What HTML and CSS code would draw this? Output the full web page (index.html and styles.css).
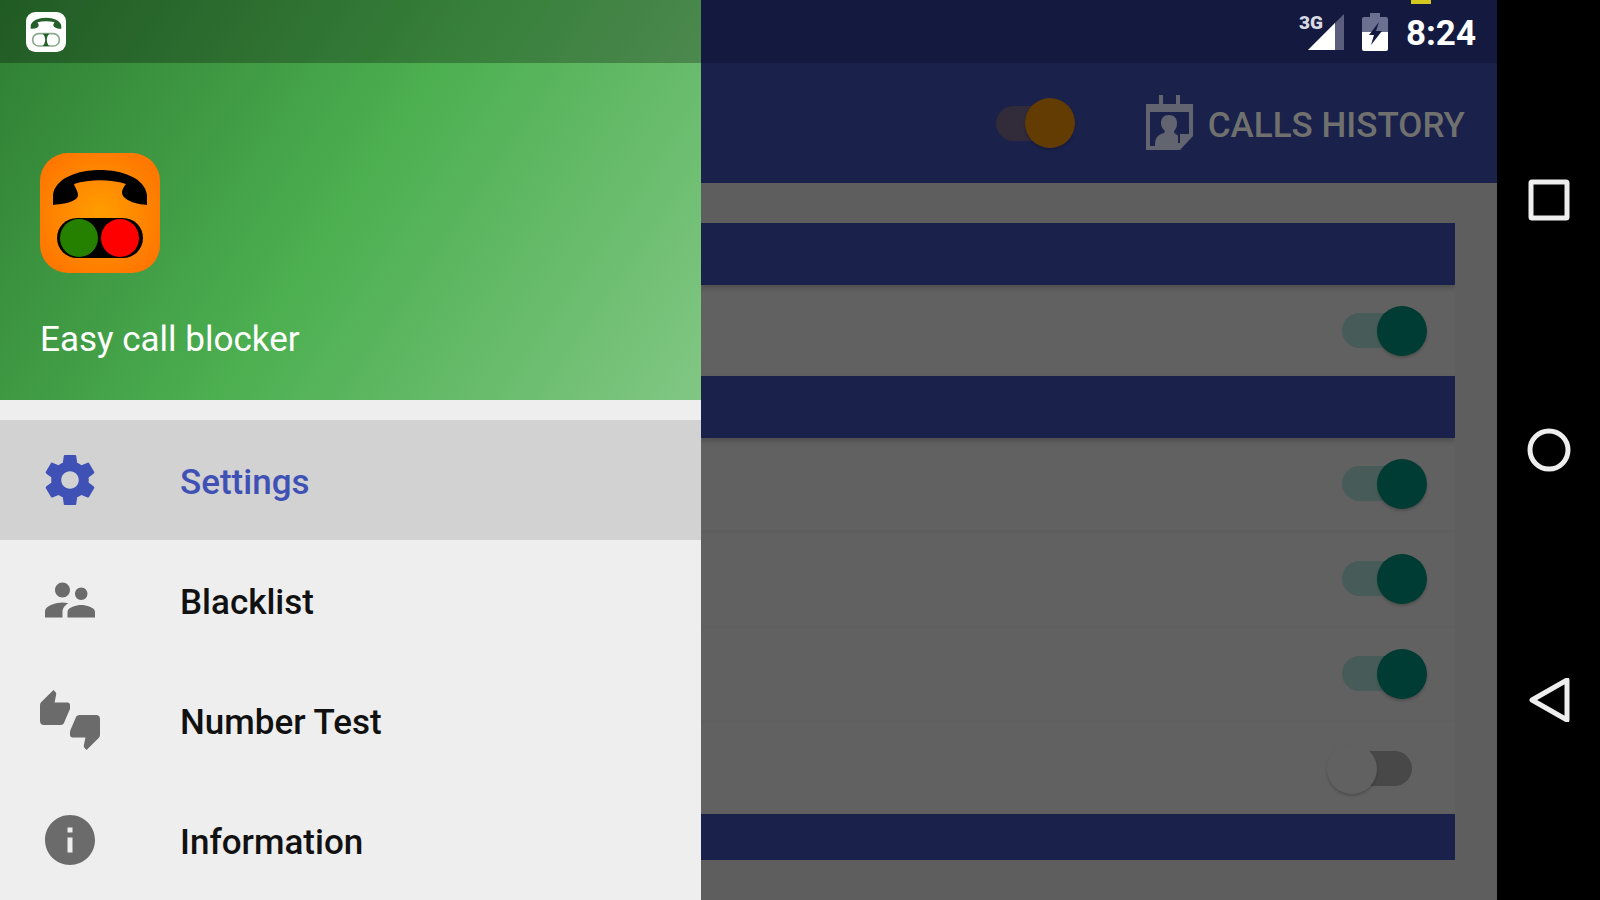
FILE: index.html
```
<!DOCTYPE html>
<html lang="en">
<head>
    <meta charset="UTF-8">
    <meta name="viewport" content="width=device-width, initial-scale=1.0">
    <title>Easy call blocker</title>
    <link rel="stylesheet" href="styles.css">
</head>
<body>
    <aside class="drawer">
        <header class="drawer-header">
            <div class="drawer-status">
                <svg class="notification" viewBox="0 0 120 120" aria-hidden="true">
                    <rect width="120" height="120" rx="28" fill="#fff"/>
                    <path fill="#23602a" d="M14 50V42C16 25 38 17 60 17S104 25 106 42V50C98 50 90 49 84 44C80 40 82 36 86 31C70 27 50 27 34 31C38 36 40 41 36 45C30 50 22 50 14 50z"/>
                    <rect x="20" y="65" width="80" height="37" rx="18" fill="none" stroke="#8aaa8d" stroke-width="5"/>
                    <path fill="#23602a" d="M50 65H70C60 74 60 92 70 102H50C60 92 60 74 50 65z"/>
                </svg>
            </div>
            <div class="account">
                <svg class="app-icon" viewBox="0 0 120 120" aria-hidden="true">
                    <defs>
                        <radialGradient id="orange" cx="50%" cy="50%" r="60%">
                            <stop offset="0" stop-color="#ff9d00"/>
                            <stop offset="1" stop-color="#ff7600"/>
                        </radialGradient>
                    </defs>
                    <rect width="120" height="120" rx="28" fill="url(#orange)"/>
                    <path d="M13 52V42C15 25 38 17 60 17S105 25 107 42V52C99 51 91 50 85 45C80 41 82 36 86 31C70 26 50 26 34 31C35 35 41 42 36 46C31 50 21 51 13 52z"/>
                    <rect x="17" y="65" width="86" height="40" rx="20"/>
                    <circle cx="39" cy="85" r="19" fill="#268000"/>
                    <circle cx="80" cy="85" r="19" fill="#f00"/>
                </svg>
                <span class="label">Easy call blocker</span>
            </div>
        </header>
        <nav class="menu">
            <a class="menu-item active" href="#settings">
                <svg viewBox="0 0 24 24" aria-hidden="true"><path d="M19.43 12.98c.04-.32.07-.64.07-.98s-.03-.66-.07-.98l2.11-1.65c.19-.15.24-.42.12-.64l-2-3.46c-.12-.22-.39-.3-.61-.22l-2.49 1c-.52-.4-1.08-.73-1.69-.98l-.38-2.65C14.46 2.18 14.25 2 14 2h-4c-.25 0-.46.18-.49.42l-.38 2.65c-.61.25-1.17.59-1.69.98l-2.49-1c-.23-.09-.49 0-.61.22l-2 3.46c-.13.22-.07.49.12.64l2.11 1.65c-.04.32-.07.65-.07.98s.03.66.07.98l-2.11 1.65c-.19.15-.24.42-.12.64l2 3.46c.12.22.39.3.61.22l2.49-1c.52.4 1.08.73 1.69.98l.38 2.65c.03.24.24.42.49.42h4c.25 0 .46-.18.49-.42l.38-2.65c.61-.25 1.17-.59 1.69-.98l2.49 1c.23.09.49 0 .61-.22l2-3.46c.12-.22.07-.49-.12-.64l-2.11-1.65zM12 15.5c-1.93 0-3.5-1.57-3.5-3.5s1.57-3.5 3.5-3.5 3.5 1.57 3.5 3.5-1.57 3.5-3.5 3.5z"/></svg>
                <span class="label">Settings</span>
            </a>
            <a class="menu-item" href="#blacklist">
                <svg viewBox="0 0 24 24" aria-hidden="true"><path d="M16.5 12c1.38 0 2.49-1.12 2.49-2.5S17.88 7 16.5 7C15.12 7 14 8.12 14 9.5s1.12 2.5 2.5 2.5zM9 11c1.66 0 2.99-1.34 2.99-3S10.66 5 9 5C7.34 5 6 6.34 6 8s1.34 3 3 3zm7.5 3c-1.83 0-5.5.92-5.5 2.75V19h11v-2.25c0-1.83-3.67-2.75-5.5-2.75zM9 13c-2.33 0-7 1.17-7 3.5V19h7v-2.25c0-.85.33-2.34 2.37-3.47C10.5 13.1 9.66 13 9 13z"/></svg>
                <span class="label">Blacklist</span>
            </a>
            <a class="menu-item" href="#test">
                <svg viewBox="0 0 24 24" aria-hidden="true"><path d="M12 6c0-.55-.45-1-1-1H5.82l.66-3.18.02-.23c0-.31-.13-.59-.33-.8L5.38 0 .44 4.94C.17 5.21 0 5.59 0 6v6.5c0 .83.67 1.5 1.5 1.5h6.75c.62 0 1.15-.38 1.38-.91l2.26-5.29c.07-.17.11-.36.11-.55V6zm10.5 4h-6.75c-.62 0-1.15.38-1.38.91l-2.26 5.29c-.07.17-.11.36-.11.55V18c0 .55.45 1 1 1h5.18l-.66 3.18-.02.24c0 .31.13.59.33.8l.79.78 4.94-4.94c.27-.27.44-.65.44-1.06v-6.5c0-.83-.67-1.5-1.5-1.5z"/></svg>
                <span class="label">Number Test</span>
            </a>
            <a class="menu-item" href="#information">
                <svg viewBox="0 0 24 24" aria-hidden="true"><path d="M12 2C6.48 2 2 6.48 2 12s4.48 10 10 10 10-4.48 10-10S17.52 2 12 2zm1 15h-2v-6h2v6zm0-8h-2V7h2v2z"/></svg>
                <span class="label">Information</span>
            </a>
        </nav>
    </aside>

    <main class="app">
        <div class="status-bar">
            <span class="marker"></span>
            <div class="signal">
                <svg viewBox="0 0 36 36" aria-hidden="true">
                    <path fill="#5b5f7d" d="M36 0V36H0z"/>
                    <path fill="#fff" d="M27 9V36H0z"/>
                </svg>
                <span class="network">3G</span>
            </div>
            <svg class="battery" viewBox="0 0 26 38" aria-hidden="true">
                <path fill="#6c7090" d="M8 0h10v4h6q2 0 2 2v13H0V6q0-2 2-2h6z"/>
                <path fill="#fff" d="M0 19h26v17q0 2-2 2H2q-2 0-2-2z"/>
                <path fill="#141a3f" d="M17 9L7 22h5l-3 10 11-14h-6z"/>
            </svg>
            <span class="label time">8:24</span>
        </div>

        <div class="toolbar">
            <input class="switch orange" type="checkbox" aria-label="Call blocking" checked>
            <button class="history" type="button">
                <svg viewBox="0 0 48 56" aria-hidden="true">
                    <path fill="#62646f" d="M14 0h4v9h13V0h4v9h13v32L35 55H1V9h13zM5 17v34h28l1-12h10V17z" fill-rule="evenodd"/>
                    <path fill="#62646f" d="M24 20c5 0 8 3 8 8 0 4-1 6-3 8 0 4 5 3 5 7v8H10c0-8 2-11 9-13 1-1 1-2 0-3-2-2-3-4-3-7 0-5 3-8 8-8z"/>
                    <path stroke="#1a214b" stroke-width="2" fill="none" d="M34 39v9"/>
                </svg>
                <span class="label">CALLS HISTORY</span>
            </button>
        </div>

        <div class="content">
            <div class="cards">
                <section>
                    <div class="card-title"></div>
                    <div class="rows">
                        <div class="row"><input class="switch" type="checkbox" aria-label="Option 1" checked></div>
                    </div>
                </section>
                <section>
                    <div class="card-title"></div>
                    <div class="rows">
                        <div class="row"><input class="switch" type="checkbox" aria-label="Option 2" checked></div>
                        <div class="row"><input class="switch" type="checkbox" aria-label="Option 3" checked></div>
                        <div class="row"><input class="switch" type="checkbox" aria-label="Option 4" checked></div>
                        <div class="row"><input class="switch" type="checkbox" aria-label="Option 5"></div>
                    </div>
                </section>
                <section>
                    <div class="card-title"></div>
                </section>
            </div>
        </div>
    </main>

    <div class="system-nav">
        <button type="button" aria-label="Recent apps">
            <svg viewBox="0 0 44 44"><rect x="4" y="4" width="36" height="36" rx="1"/></svg>
        </button>
        <button type="button" aria-label="Home">
            <svg viewBox="0 0 44 44"><circle cx="22" cy="22" r="19"/></svg>
        </button>
        <button type="button" aria-label="Back">
            <svg viewBox="0 0 44 44"><path d="M40 2V42L5 22z"/></svg>
        </button>
    </div>
</body>
</html>
```
FILE: styles.css
```
* {
    box-sizing: border-box;
}
body {
    display: flex;
    height: 100vh;
    margin: 0;
    overflow: hidden;
    background: #000;
    font-family: Roboto, "Liberation Sans", sans-serif;
    font-size: 35px;
    line-height: 40px;
}
svg {
    display: block;
    flex: none;
}
button {
    padding: 0;
    border: none;
    background: none;
    font: inherit;
    cursor: pointer;
}
.label {
    padding-top: 5px;
}

/* drawer */
.drawer {
    display: flex;
    flex-direction: column;
    flex: 0 0 701px;
    background: #eee;
    overflow: hidden;
}
.drawer-header {
    flex: none;
    background: linear-gradient(124deg, #2e7d32, #4caf50 50%, #81c784);
    color: #fff;
}
.drawer-status {
    display: flex;
    align-items: center;
    height: 63px;
    padding: 0 26px;
    background: rgba(0, 0, 0, 0.27);
}
.notification {
    width: 40px;
    height: 40px;
}
.account {
    display: flex;
    flex-direction: column;
    gap: 42px;
    padding: 90px 40px 40px;
}
.app-icon {
    width: 120px;
    height: 120px;
}
.menu {
    padding-top: 20px;
}
.menu-item {
    display: flex;
    align-items: center;
    gap: 80px;
    height: 120px;
    padding: 0 40px;
    color: #111;
    font-weight: 500;
    text-decoration: none;
}
.menu-item svg {
    width: 60px;
    height: 60px;
    fill: #6b6b6b;
}
.menu-item.active {
    background: #d2d2d2;
    color: #3f51b5;
}
.menu-item.active svg {
    fill: #3f51b5;
}

/* app behind the drawer */
.app {
    display: flex;
    flex-direction: column;
    flex: 1;
    min-width: 0;
    background: #5e5e5e;
}
.status-bar {
    position: relative;
    display: flex;
    align-items: center;
    justify-content: flex-end;
    gap: 18px;
    flex: none;
    height: 63px;
    padding-right: 21px;
    background: #141a3f;
    color: #fff;
}
.marker {
    position: absolute;
    top: 0;
    right: 66px;
    width: 20px;
    height: 4px;
    background: #d2c81e;
}
.signal {
    position: relative;
}
.signal svg {
    width: 36px;
    height: 36px;
}
.network {
    position: absolute;
    top: -1px;
    left: -9px;
    color: #d8d9e2;
    font-size: 19px;
    font-weight: 900;
    line-height: 20px;
}
.battery {
    width: 26px;
    height: 38px;
}
.time {
    font-weight: 700;
}
.toolbar {
    display: flex;
    align-items: center;
    justify-content: flex-end;
    gap: 70px;
    flex: none;
    height: 120px;
    padding-right: 32px;
    background: #1a214b;
}
.history {
    display: flex;
    align-items: center;
    gap: 15px;
    color: #70716e;
    font-weight: 500;
}
.history svg {
    width: 48px;
    height: 56px;
}
.content {
    flex: 1;
    min-height: 0;
    padding: 40px 42px 40px 0;
}
.cards {
    height: 100%;
    overflow: hidden;
    background: #616161;
}
.card-title {
    height: 62px;
    background: #1a214b;
    box-shadow: 0 3px 5px rgba(0, 0, 0, 0.2);
}
.rows {
    display: grid;
    gap: 4px;
}
.row {
    display: flex;
    align-items: center;
    justify-content: flex-end;
    height: 91px;
    padding-right: 28px;
}
.row + .row {
    box-shadow: 0 -3px #5f5f5f;
}

/* switches: track and thumb share one grid cell */
.switch {
    display: grid;
    align-items: center;
    width: 100px;
    height: 50px;
    margin: 0;
    appearance: none;
    cursor: pointer;
}
.switch::before,
.switch::after {
    content: "";
    grid-area: 1 / 1;
}
.switch::before {
    height: 35px;
    margin: 0 15px;
    border-radius: 18px;
    background: #484848;
}
.switch::after {
    width: 50px;
    height: 50px;
    border-radius: 50%;
    background: #616161;
    box-shadow: 0 2px 3px rgba(0, 0, 0, 0.2);
}
.switch:checked::before {
    background: #475c58;
}
.switch:checked::after {
    justify-self: end;
    background: #003c33;
}
.switch.orange {
    width: 94px;
}
.switch.orange::before {
    background: #312b3a;
}
.switch.orange::after {
    background: #633c04;
}

/* system buttons */
.system-nav {
    display: flex;
    flex-direction: column;
    flex: 0 0 103px;
    padding: 75px 0;
    background: #000;
}
.system-nav button {
    display: flex;
    align-items: center;
    justify-content: center;
    flex: 1;
}
.system-nav svg {
    width: 44px;
    height: 44px;
    fill: none;
    stroke: #eee;
    stroke-width: 5;
    stroke-linejoin: round;
}
```
